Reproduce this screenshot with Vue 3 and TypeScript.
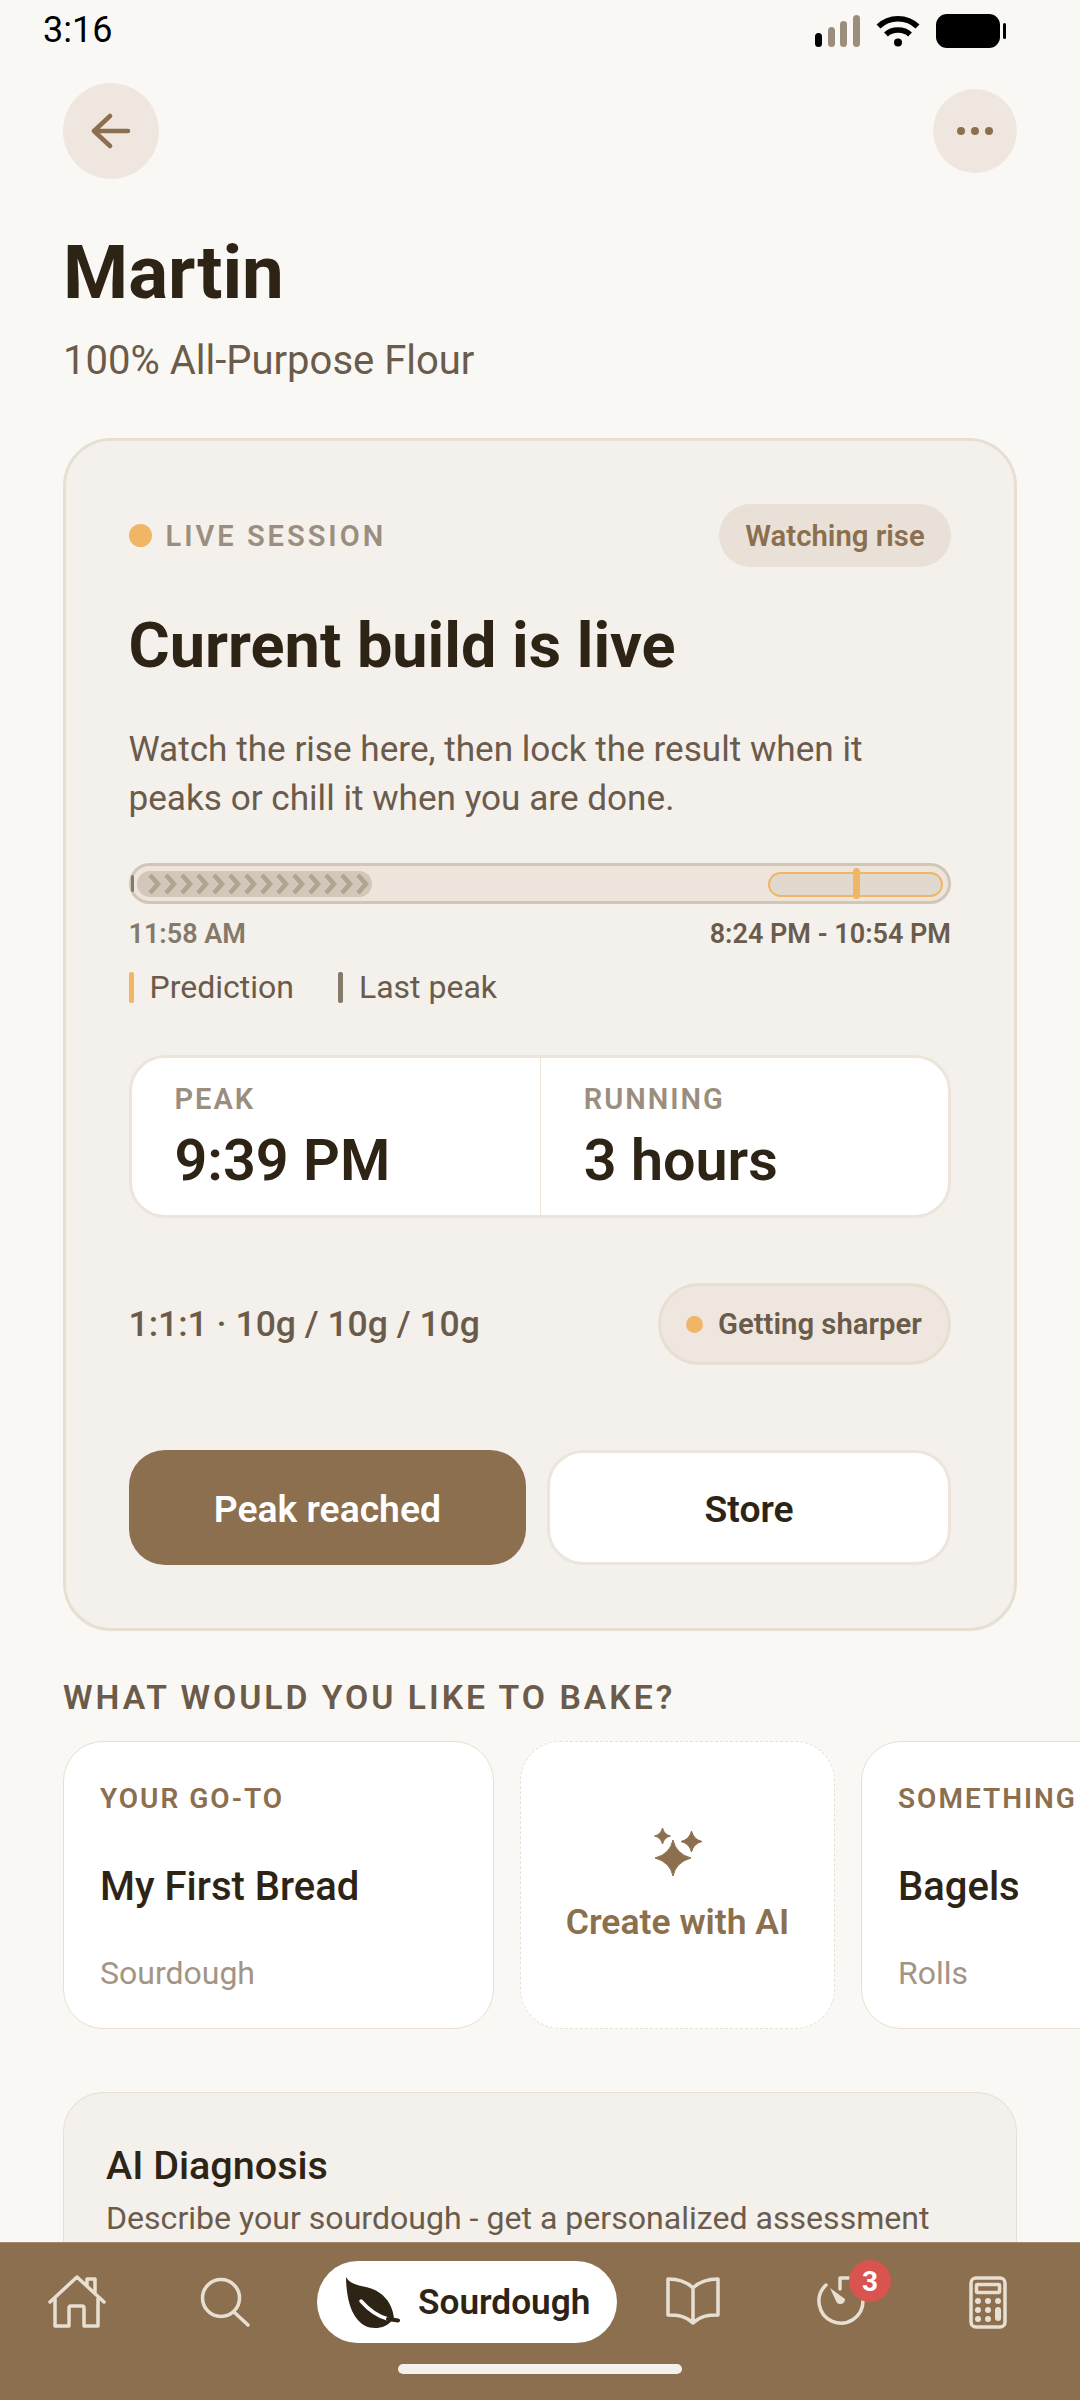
<template>
  <div class="screen">
    <div class="status-bar">
      <span class="clock">3:16</span>
      <div class="status-icons">
        <svg width="45" height="32" viewBox="0 0 45 32">
          <rect x="0" y="18" width="7" height="14" rx="3.5" fill="#000" />
          <rect x="13" y="12" width="7" height="20" rx="3.5" fill="#9c8e7e" />
          <rect x="25" y="6" width="7" height="26" rx="3.5" fill="#9c8e7e" />
          <rect x="38" y="0" width="7" height="32" rx="3.5" fill="#9c8e7e" />
        </svg>
        <svg width="44" height="32" viewBox="0 0 44 32" fill="none" stroke="#000" stroke-width="5.5">
          <path d="M2.5 11.5C13 1 31 1 41.500 11.500" />
          <path d="M10 19.500C16 13.500 28 13.500 34 19.500" />
          <circle cx="22" cy="27.500" r="4" fill="#000" stroke="none" />
        </svg>
        <div class="battery">
          <div class="battery-body"></div>
          <div class="battery-nub"></div>
        </div>
      </div>
    </div>

    <div class="scroll">
      <div class="top-row">
        <button class="round-btn back">
          <svg width="40" height="36" viewBox="0 0 40 36" fill="none" stroke="#8b6f4e" stroke-width="4.500" stroke-linecap="round" stroke-linejoin="round">
            <path d="M37 18H4M19 3 3 18l16 15" />
          </svg>
        </button>
        <button class="round-btn more">
          <span></span><span></span><span></span>
        </button>
      </div>

      <h1 class="title">Martin</h1>
      <p class="subtitle">100% All-Purpose Flour</p>

      <section class="live-card">
        <div class="live-head">
          <div class="live-label"><i class="dot"></i>LIVE SESSION</div>
          <div class="watch-pill">Watching rise</div>
        </div>
        <h2 class="live-title">Current build is live</h2>
        <p class="live-text">Watch the rise here, then lock the result when it peaks or chill it when you are done.</p>

        <div class="track">
          <i class="last-mark"></i>
          <div class="progress">
            <svg width="235" height="26" viewBox="0 0 235 26" fill="none" stroke="#b0a390" stroke-width="4.500">
              <polyline v-for="n in chevrons" :key="n" :points="chevronPoints(n)" />
            </svg>
          </div>
          <div class="window"><i class="window-mark"></i></div>
        </div>
        <div class="times">
          <span class="time-start">11:58 AM</span>
          <span class="time-end">8:24 PM - 10:54 PM</span>
        </div>
        <div class="legend">
          <span class="legend-item"><i class="legend-bar amber"></i>Prediction</span>
          <span class="legend-item"><i class="legend-bar grey"></i>Last peak</span>
        </div>

        <div class="stats">
          <div v-for="s in stats" :key="s.label" class="stat">
            <div class="stat-label">{{ s.label }}</div>
            <div class="stat-value">{{ s.value }}</div>
          </div>
        </div>

        <div class="ratio-row">
          <span class="ratio">1:1:1 · 10g / 10g / 10g</span>
          <span class="sharp-pill"><i class="sharp-dot"></i>Getting sharper</span>
        </div>

        <div class="actions">
          <button class="btn primary">Peak reached</button>
          <button class="btn secondary">Store</button>
        </div>
      </section>

      <h3 class="section-title">WHAT WOULD YOU LIKE TO BAKE?</h3>
      <div class="bake-row">
        <div class="bake-card wide">
          <div class="bake-tag">YOUR GO-TO</div>
          <div class="bake-name">My First Bread</div>
          <div class="bake-sub">Sourdough</div>
        </div>
        <div class="bake-card ai">
          <svg width="50" height="50" viewBox="0 0 50 50" fill="#8b6f4e" stroke="#8b6f4e" stroke-width="1" stroke-linejoin="round">
            <path d="M20 13Q23 27 38 31 23 35 20 49 17 35 2 31 17 27 20 13Z" />
            <path d="M9.500 1Q11 7.500 17.500 9 11 10.500 9.500 17 8 10.500 1.500 9 8 7.500 9.500 1Z" />
            <path d="M38.500 4Q40.500 12.500 49 14.500 40.500 16.500 38.500 25 36.500 16.500 28 14.500 36.500 12.500 38.500 4Z" />
          </svg>
          <div class="ai-text">Create with AI</div>
        </div>
        <div class="bake-card wide">
          <div class="bake-tag">SOMETHING</div>
          <div class="bake-name">Bagels</div>
          <div class="bake-sub">Rolls</div>
        </div>
      </div>

      <section class="ai-card">
        <div class="ai-title">AI Diagnosis</div>
        <div class="ai-desc">Describe your sourdough - get a personalized assessment</div>
      </section>
    </div>

    <nav class="nav">
      <div class="nav-cell">
        <svg width="58" height="54" viewBox="0 0 58 54" class="nav-icon">
          <path d="M2 27 29 2l27 25M7 23v28h14V33q0-2 2-2h11q2 0 2 2v18h14V23M39 11V4h8v15" />
        </svg>
      </div>
      <div class="nav-cell">
        <svg width="52" height="52" viewBox="0 0 52 52" class="nav-icon">
          <circle cx="22" cy="22" r="18.500" />
          <path d="M35 36 49 49" />
        </svg>
      </div>
      <div class="nav-cell">
        <div class="nav-pill">
          <svg width="56" height="53" viewBox="0 0 56 53">
            <path d="M2 1C5 7 12 9 22 11 36 14 48 24 50 42 44 50 38 52 31 52 16 52 8 38 5 26 3 18 2 9 2 1Z" fill="#2e2416" />
            <path d="M17 25C24 33 32 40 44 43" fill="none" stroke="#fff" stroke-width="3.500" stroke-linecap="round" />
            <path d="M44 43 54 44.500" fill="none" stroke="#2e2416" stroke-width="4" stroke-linecap="round" />
          </svg>
          <span>Sourdough</span>
        </div>
      </div>
      <div class="nav-cell">
        <svg width="56" height="50" viewBox="0 0 56 50" class="nav-icon">
          <path d="M28 11C21 4 11 2 3 2v36c10 0 18 1 25 8 7-7 15-8 25-8V2C45 2 35 4 28 11ZM28 11v33" />
        </svg>
      </div>
      <div class="nav-cell">
        <div class="timer">
          <svg width="52" height="52" viewBox="0 0 52 52" class="nav-icon">
            <path d="M11 9A22 22 0 1 0 48 25M25 13V2h9" />
            <path d="M15 12 30 23Q30 28 25 28 22 28 21 25Z" class="hand" />
          </svg>
          <span class="badge">3</span>
        </div>
      </div>
      <div class="nav-cell">
        <svg width="38" height="53" viewBox="0 0 38 53" class="nav-icon">
          <rect x="2" y="2" width="34" height="49" rx="5" />
          <rect x="7.500" y="8.500" width="23" height="8" rx="1" />
          <g class="keys">
            <circle cx="9" cy="25" r="3" /><circle cx="19" cy="25" r="3" /><circle cx="29" cy="25" r="3" />
            <circle cx="9" cy="34" r="3" /><circle cx="19" cy="34" r="3" />
            <circle cx="9" cy="43" r="3" /><circle cx="19" cy="43" r="3" />
            <rect x="26" y="31" width="6" height="14" rx="3" />
          </g>
        </svg>
      </div>
      <div class="home-bar"></div>
    </nav>
  </div>
</template>

<script setup lang="ts">
const chevrons = Array.from({ length: 15 }, (_, i) => i)

const stats = [
  { label: 'PEAK', value: '9:39 PM' },
  { label: 'RUNNING', value: '3 hours' }
]

// one arrow in the progress fill, 16px apart
const chevronPoints = (n: number): string => {
  const x = 13 + n * 16
  return `${x},4 ${x + 8},13 ${x},22`
}
</script>

<style>
html,
body {
  margin: 0;
  background: #faf8f4;
}
</style>

<style scoped>
* {
  box-sizing: border-box;
}

.screen {
  width: 1080px;
  height: 2400px;
  display: flex;
  flex-direction: column;
  overflow: hidden;
  background: #faf8f4;
  font-family: Roboto, "Liberation Sans", sans-serif;
  color: #2e2416;
}

.status-bar {
  flex: none;
  height: 60px;
  padding: 0 74px 0 43px;
  display: flex;
  justify-content: space-between;
  align-items: flex-start;
}

.clock {
  font-size: 36px;
  line-height: 60px;
  color: #000;
}

.status-icons {
  display: flex;
  align-items: flex-start;
  gap: 16px;
  padding-top: 15px;
}

.battery {
  display: flex;
  align-items: center;
  gap: 3px;
  margin-top: -1px;
}

.battery-body {
  width: 64px;
  height: 34px;
  border-radius: 11px;
  background: #000;
}

.battery-nub {
  width: 3px;
  height: 16px;
  border-radius: 2px;
  background: #000;
}

.scroll {
  flex: 1;
  min-height: 0;
  overflow: hidden;
  padding: 0 63px;
}

.top-row {
  margin-top: 23px;
  display: flex;
  justify-content: space-between;
  align-items: center;
}

.round-btn {
  border: none;
  padding: 0;
  border-radius: 50%;
  background: #efe7df;
  display: flex;
  align-items: center;
  justify-content: center;
}

.back {
  width: 96px;
  height: 96px;
}

.more {
  width: 84px;
  height: 84px;
  gap: 6px;
}

.more span {
  width: 8px;
  height: 8px;
  border-radius: 50%;
  background: #8b6f4e;
}

.title {
  margin: 52px 0 0;
  font-size: 74.5px;
  line-height: 84px;
  font-weight: 700;
}

.subtitle {
  margin: 22px 0 0;
  font-size: 40px;
  line-height: 48px;
  color: #6b5b4b;
}

.live-card {
  margin-top: 53px;
  padding: 63px 63px 63px 62.5px;
  border: 3px solid #e8dfd3;
  border-radius: 48px;
  background: #f4f0eb;
}

.live-head {
  display: flex;
  justify-content: space-between;
  align-items: center;
}

.live-label {
  display: flex;
  align-items: center;
  gap: 14px;
  font-size: 29px;
  font-weight: 600;
  letter-spacing: 3px;
  color: #9c8e7e;
}

.dot {
  width: 23px;
  height: 23px;
  border-radius: 50%;
  background: #f0b565;
}

.watch-pill {
  height: 63px;
  width: 232px;
  border-radius: 32px;
  background: #e9e1d7;
  display: flex;
  align-items: center;
  justify-content: center;
  font-size: 29.3px;
  font-weight: 600;
  color: #8b6f4e;
}

.live-title {
  margin: 43px 0 0;
  font-size: 63px;
  line-height: 72px;
  font-weight: 700;
}

.live-text {
  margin: 43px 0 0;
  font-size: 35.15px;
  line-height: 49px;
  color: #6b5b4b;
}

.track {
  position: relative;
  margin-top: 40px;
  height: 41px;
  border: 3px solid #d2c6b9;
  border-radius: 21px;
  background: #ede5dc;
}

.last-mark {
  position: absolute;
  left: -1px;
  top: 9px;
  width: 3px;
  height: 17px;
  border-radius: 2px;
  background: #85796a;
}

.progress {
  position: absolute;
  left: 5px;
  top: 5px;
  width: 235px;
  height: 26px;
  border-radius: 13px;
  overflow: hidden;
  background: #d2c7ba;
}

.progress svg {
  display: block;
}

.window {
  position: absolute;
  right: 5px;
  top: 6px;
  width: 175px;
  height: 25px;
  border: 2px solid #f0b565;
  border-radius: 13px;
  background: #e2d9ce;
}

.window-mark {
  position: absolute;
  left: 83px;
  top: -6px;
  width: 7px;
  height: 31px;
  border-radius: 4px;
  background: #f0b565;
}

.times {
  margin-top: 13px;
  display: flex;
  justify-content: space-between;
  font-size: 27px;
  line-height: 34px;
  font-weight: 600;
}

.time-start {
  color: #85796a;
}

.time-end {
  color: #6b5b4b;
}

.legend {
  margin-top: 17px;
  display: flex;
  gap: 44px;
  font-size: 32px;
  line-height: 38px;
  color: #6b5b4b;
}

.legend-item {
  display: flex;
  align-items: center;
  gap: 16px;
}

.legend-bar {
  width: 5px;
  height: 31px;
  border-radius: 2px;
}

.amber {
  background: #f0b565;
}

.grey {
  background: #85796a;
}

.stats {
  margin-top: 49px;
  height: 163px;
  display: grid;
  grid-template-columns: 1fr 1fr;
  border: 3px solid #ede5dc;
  border-radius: 36px;
  background: #fff;
}

.stat {
  padding: 25px 0 0 43px;
}

.stat + .stat {
  border-left: 1px solid #ede5dc;
}

.stat-label {
  font-size: 29px;
  line-height: 32px;
  font-weight: 600;
  letter-spacing: 2px;
  color: #9c8e7e;
}

.stat-value {
  margin-top: 13px;
  font-size: 57.5px;
  line-height: 66px;
  font-weight: 600;
}

.ratio-row {
  margin-top: 65px;
  display: flex;
  justify-content: space-between;
  align-items: center;
}

.ratio {
  font-size: 35.5px;
  font-weight: 500;
  color: #6b5b4b;
}

.sharp-pill {
  width: 293px;
  height: 82px;
  padding-left: 25px;
  display: flex;
  align-items: center;
  gap: 15px;
  border: 3px solid #e8dfd3;
  border-radius: 41px;
  background: #efe7df;
  font-size: 29.3px;
  font-weight: 600;
  color: #6b5b4b;
}

.sharp-dot {
  width: 17px;
  height: 17px;
  border-radius: 50%;
  background: #f0b565;
}

.actions {
  margin-top: 85px;
  display: flex;
  gap: 21px;
}

.btn {
  flex: 1;
  height: 115px;
  border-radius: 36px;
  font-family: inherit;
  font-size: 37.3px;
  font-weight: 600;
  padding: 2px 0 0;
}

.primary {
  border: none;
  background: #8b6f4e;
  color: #fff;
}

.secondary {
  border: 3px solid #ede5dc;
  background: #fff;
  color: #2e2416;
}

.section-title {
  margin: 47px 0 0;
  font-size: 33.7px;
  line-height: 40px;
  font-weight: 600;
  letter-spacing: 3px;
  color: #6b5b4b;
}

.bake-row {
  margin-top: 23px;
  display: flex;
  gap: 26px;
  width: 1200px;
}

.bake-card {
  flex: none;
  height: 288px;
  border: 1px solid #e8dfd3;
  border-radius: 40px;
  background: #fff;
}

.wide {
  width: 431px;
  padding: 41px 0 0 36px;
}

.ai {
  width: 315px;
  border-style: dashed;
  display: flex;
  flex-direction: column;
  align-items: center;
  padding-top: 85px;
}

.bake-tag {
  font-size: 28px;
  line-height: 32px;
  font-weight: 600;
  letter-spacing: 2px;
  color: #8b6f4e;
}

.bake-name {
  margin-top: 49px;
  font-size: 40px;
  line-height: 46px;
  font-weight: 500;
}

.bake-sub {
  margin-top: 44px;
  font-size: 32px;
  line-height: 38px;
  color: #a39585;
}

.ai-text {
  margin-top: 24px;
  font-size: 35.5px;
  line-height: 42px;
  font-weight: 600;
  color: #8b6f4e;
}

.ai-card {
  margin-top: 63px;
  height: 320px;
  padding: 49px 42px 0;
  border: 1px solid #e8dfd3;
  border-radius: 40px;
  background: #f4f0eb;
}

.ai-title {
  font-size: 39.5px;
  line-height: 48px;
  font-weight: 500;
}

.ai-desc {
  margin-top: 7px;
  font-size: 32.1px;
  line-height: 42px;
  color: #6b5b4b;
}

.nav {
  position: relative;
  flex: none;
  height: 158px;
  padding-top: 18px;
  display: grid;
  grid-template-columns: 154px 142px 342px 110px 186px 108px;
  align-items: start;
  background: #8b6f4e;
  border-top: 1px solid #a08a6e;
}

.nav-cell {
  height: 82px;
  display: flex;
  align-items: center;
  justify-content: center;
}

.nav-icon {
  fill: none;
  stroke: #e8dfd3;
  stroke-width: 3.5;
  stroke-linecap: round;
  stroke-linejoin: round;
}

.nav-icon .hand,
.nav-icon .keys {
  fill: #e8dfd3;
  stroke: none;
}

.nav-pill {
  width: 300px;
  height: 82px;
  padding-left: 27px;
  display: flex;
  align-items: center;
  gap: 18px;
  border-radius: 41px;
  background: #fff;
  font-size: 35.2px;
  font-weight: 600;
}

.timer {
  position: relative;
  width: 52px;
  height: 52px;
}

.timer svg {
  display: block;
}

.badge {
  position: absolute;
  left: 34px;
  top: -16px;
  width: 42px;
  height: 42px;
  border-radius: 50%;
  background: #d9534f;
  display: flex;
  align-items: center;
  justify-content: center;
  font-size: 28px;
  font-weight: 700;
  color: #fff;
}

.home-bar {
  position: absolute;
  left: 398px;
  top: 121px;
  width: 284px;
  height: 10px;
  border-radius: 5px;
  background: #f4f0eb;
}
</style>
